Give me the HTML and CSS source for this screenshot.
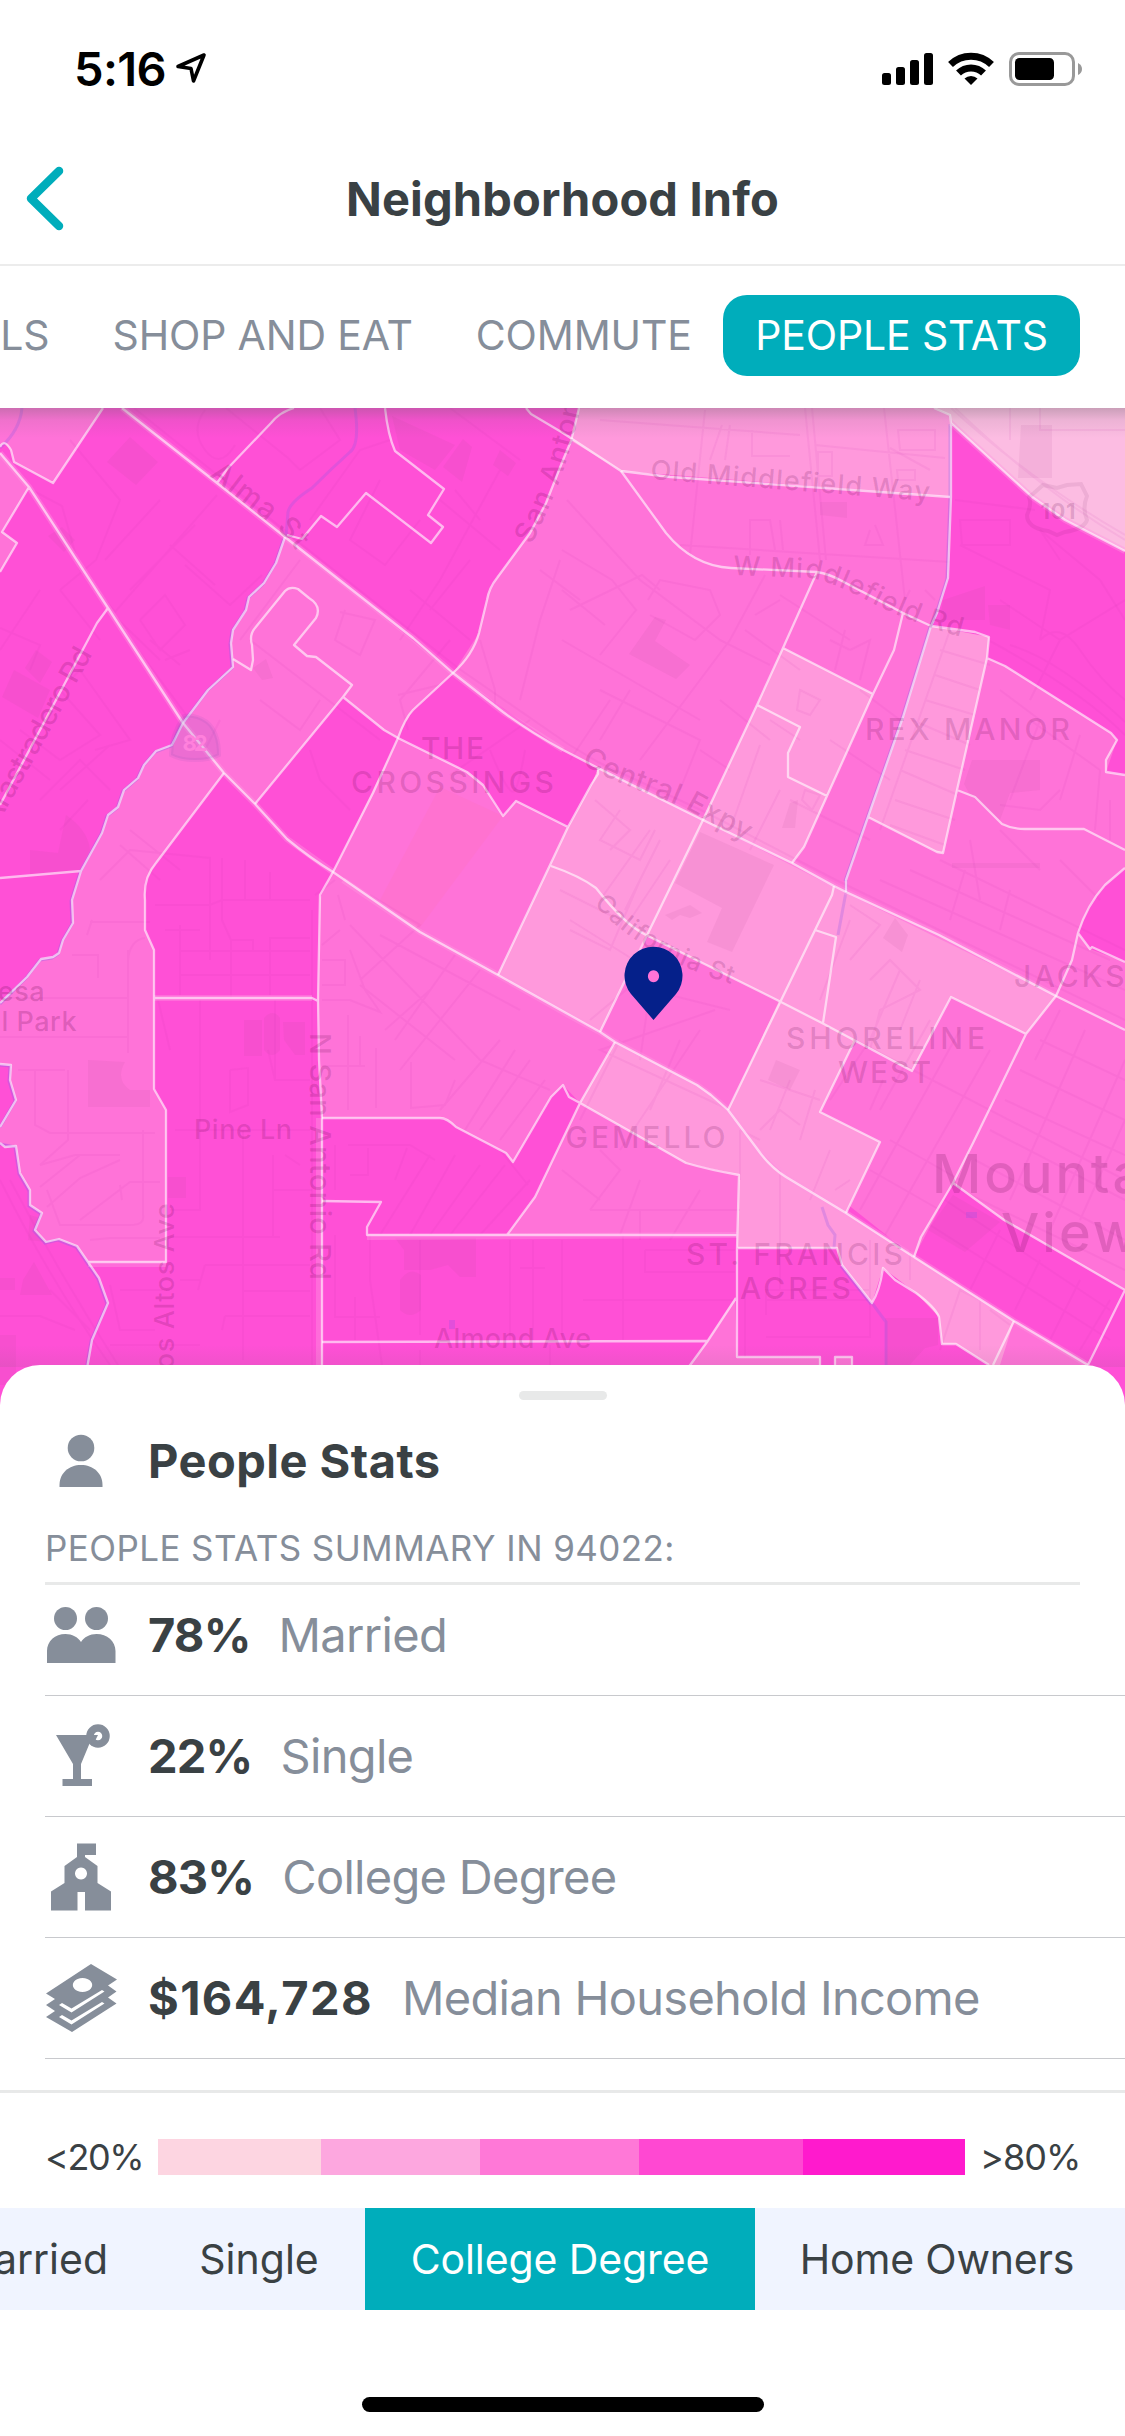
FILE: index.html
```html
<!DOCTYPE html>
<html lang="en">
<head>
<meta charset="utf-8">
<title>Neighborhood Info</title>
<link rel="stylesheet" href="styles.css">
</head>
<body>
<div class="screen">
  <div class="status">
    <span class="time">5:16</span>
    <svg class="loc" width="32" height="32" viewBox="0 0 32 32"><path d="M29 3 L3 14.500 L16 16.500 L18.500 29 Z" fill="none" stroke="#000" stroke-width="3.600" stroke-linejoin="round"/></svg>
    <span class="grow"></span>
    <svg class="signals" width="202" height="36" viewBox="881 51 202 36">
      <rect x="882" y="73" width="9" height="12" rx="2.500"/><rect x="896" y="67" width="9" height="18" rx="2.500"/><rect x="910" y="60" width="9" height="25" rx="2.500"/><rect x="924" y="53" width="9" height="32" rx="2.500"/>
      <g fill="none" stroke="#000" stroke-width="7"><path d="M950.500 64.500 A29.500 29.500 0 0 1 991.500 64.500"/><path d="M958.500 73 A18 18 0 0 1 983.500 73"/></g>
      <path d="M971 85 L964.500 78.500 A9.500 9.500 0 0 1 977.500 78.500 Z"/>
      <rect x="1010.500" y="53.500" width="63" height="31" rx="8.500" fill="none" stroke="#999" stroke-width="3"/>
      <rect x="1015" y="58" width="39" height="22" rx="4.500"/>
      <path d="M1078 63 Q1082 65 1082 69 Q1082 73 1078 75 Z" fill="#999"/>
    </svg>
  </div>
  <header class="nav">
    <svg class="back" width="40" height="66" viewBox="0 0 40 66"><path d="M35 6 L7 33.500 L35 61" fill="none" stroke="#00adbb" stroke-width="8.500" stroke-linecap="round" stroke-linejoin="round"/></svg>
    <h1 class="title">Neighborhood Info</h1>
  </header>
  <nav class="tabs">
    <span class="tab tab-schools">SCHOOLS</span>
    <span class="tab tab-shop">SHOP AND EAT</span>
    <span class="tab tab-commute">COMMUTE</span>
    <span class="tab tab-on">PEOPLE STATS</span>
  </nav>
  <div class="map">
    <svg class="map-art" width="1125" height="1012" viewBox="0 408 1125 1012">
      <defs>
        <linearGradient id="shade" x1="0" y1="0" x2="0" y2="1"><stop offset="0" stop-color="#606060" stop-opacity=".32"/><stop offset=".4" stop-color="#606060" stop-opacity=".1"/><stop offset="1" stop-color="#606060" stop-opacity="0"/></linearGradient>
        <linearGradient id="lift" x1="0" y1="0" x2="0" y2="1"><stop offset="0" stop-color="#606060" stop-opacity="0"/><stop offset="1" stop-color="#606060" stop-opacity=".1"/></linearGradient>
        <path id="alma" d="M209 476 L262 517 Q288 536 304 562"/>
        <path id="sanant" d="M532 545 C548 508 568 475 585 385"/>
        <path id="oldmid" d="M650 479 L940 502"/>
        <path id="wmid" d="M733 575 L810 578 Q835 583 870 602 Q925 630 990 644"/>
        <path id="arast" d="M-3 826 L96 648"/>
        <path id="central" d="M581 763 C615 785 650 792 688 810 L765 852"/>
        <path id="calif" d="M594 904 C630 945 690 975 760 992"/>
      </defs>
      <rect y="408" width="1125" height="1012" class="f4"/>
      <!-- block groups -->
      <g class="f3">
        <path d="M0 408H103L53 483L14 462L11 450L4 444L0 447Z"/>
        <path d="M0 453L29 487L2 532L17 543L0 572Z"/>
        <path d="M285 537L453 673L413 710L398 738L384 730L343 697L255 804L224 773L156 863L145 883L145 930L154 950V1089L166 1110V1262H88L77 1246L59 1239L46 1242L35 1230L42 1213L30 1205V1190L20 1173L16 1146L0 1143V1127L16 1100L10 1080L11 1065L0 1064V1003L27 977L41 959L53 957L59 953L63 940L73 923L72 900L81 871L102 833L108 815L118 807L124 790L138 778L144 765L156 751L172 745L183 723L208 690L233 667L231 643L233 630L246 610L249 597L264 583L276 563Z"/>
        <path d="M398 738L467 772L483 785L503 816L516 801L568 827L498 975L615 1042L580 1103L563 1085L551 1097L513 1162L506 1153L456 1127L445 1118H322L318 1001L320 898L333 872Z"/>
        <path d="M580 1103L686 1163L739 1175L737 1233L507 1235L535 1197Z"/>
        <path d="M571 441L621 471L950 497L948 578L931 626L989 637L987 658L1005 666L1111 733L1117 740L1106 772L1125 775V868L1105 885L1090 905L1078 933L1090 949L1125 962V1290L1004 1220L953 1183L914 1257L728 1110L600 1032L646 935L598 768L563 750L453 673L479 633L489 593L497 578L530 533L546 503L563 460Z"/>
        <path d="M735 1298L737 1357H820V1420H600L691 1365L707 1341ZM835 1357h17v63h-17ZM1014 1321L1088 1365V1420H960L993 1365Z"/>
      </g>
      <g class="f2">
        <path d="M579 408H934L950 415V497L621 471L571 441Z"/>
        <path d="M783 648L873 694L827 796L804 847L792 863L703 820L757 705Z"/>
        <path d="M598 768L703 820L834 887L1056 996L1026 1034L951 997L912 1071L855 1040L820 1112L880 1142L846 1213L786 1177L758 1150L728 1110L779 1001L646 935L600 1032L498 975L568 827L591 785Z"/>
        <path d="M931 626L989 637L987 658L957 790L943 853L937 852L868 817L903 717Z"/>
        <path d="M615 1042L580 1103L686 1163L739 1175L737 1248H837L842 1265L872 1303L883 1268L916 1293L939 1317L942 1344H956L989 1365L1000 1365L1014 1321L846 1213L786 1177L758 1150L728 1110L711 1095L697 1085Z"/>
      </g>
      <path class="f4" d="M453 673L503 712L563 750L598 768L591 785L568 827L516 801L503 816L483 785L467 772L398 738L413 710Z"/>
      <path class="f1" d="M934 408L950 415L951 423L1032 497L1065 520L1125 551V408Z"/>
      <path fill="#ff72d0" d="M440 787L503 816L418 930L380 900Z"/>

      <!-- parks, schools and civic grounds -->
      <g class="ground">
        <path d="M107 462L130 437L158 462L136 485ZM463 439L472 447L462 482L443 467ZM493 465L500 450L516 463L508 476ZM392 416L455 445L435 470L400 450ZM36 650L52 662L40 683L25 668ZM14 670L50 690L38 718L2 697ZM66 815Q88 830 90 850L78 872L30 875V850L58 853ZM48 536L62 527L75 540L64 552ZM253 668L266 659L273 678L262 680Z"/>
        <path d="M88 1060L125 1062Q115 1080 130 1090H150V1107H88ZM244 1020H262V1056H244ZM264 1018Q273 1008 280 1018V1050Q272 1060 264 1050ZM283 1022H305V1055H295L284 1040ZM168 1177H186V1198H168ZM30 1215L40 1218L36 1230L47 1242L28 1240ZM23 1280L34 1262L52 1295H20ZM0 1278H15V1290H0Z"/>
        <path d="M395 1238H476V1277H460L448 1265L430 1270H404V1250ZM400 1280Q410 1266 421 1275V1310Q410 1320 400 1310ZM0 1335h16v50h-16z"/>
        <path d="M629 654L655 617L666 620L655 641L690 665L676 679ZM820 502H847V518L820 515ZM943 600L985 586V620L940 620ZM988 605H1010V630L990 625ZM964 784L972 760H1040V790L1010 793L1000 820L970 795ZM790 803L798 800L795 828L782 828ZM700 832L774 865L732 952L707 942L722 908L675 883ZM665 915L690 905L702 913L690 918L680 915L672 920ZM883 938L895 918L908 935L902 952ZM776 1060L800 1070L790 1090L768 1080ZM953 1195L1000 1222L965 1252L928 1230ZM885 1318H938V1345L925 1348L905 1370H885ZM1021 425H1052V478H1018ZM952 863H1040V868H952Z"/>
      </g>

      <!-- minor streets -->
      <g class="streets">
        <path d="M134 408L226 482L296 540L458 668L568 744L598 762L705 812L836 880L1125 1020M226 408L288 458L300 470M0 628L40 645L30 670M26 487L62 506L80 570L115 612L217 495M110 612L190 720M108 610L160 660M70 440L120 500L96 560L60 590M60 590L100 640M40 590L0 650M160 500L105 560M195 525L130 590M170 545L215 585M185 565L230 605L262 575M140 620L165 595L185 625L160 650L140 620M150 640L180 665M165 660L190 650M20 730L60 760L100 735L60 690M60 690L80 670L130 740L95 750M60 790L110 745M0 740L50 780M40 800L80 760L110 790M88 800L60 830"/>
        <path d="M205 410Q190 430 205 450T235 445M320 408L340 440L300 470M310 520L360 450L390 440M380 480L350 540L385 565L420 520M450 408L520 460M440 500L500 550M500 470L440 580L400 640M410 590L470 640M470 560L430 610M455 490L480 520M300 560L240 640M345 610L335 640L360 655L375 620L340 612M250 640L380 740M260 700L300 730L320 700M220 720L205 750M310 750L320 780L350 810M450 640L400 700L408 730M398 695L440 685M480 640L495 690V705M560 560L540 620L520 700M540 570L580 600M490 750Q510 800 515 790T525 750M450 775L530 720"/>
        <path d="M120 845L160 880M130 830L180 870M100 880L130 850L210 858V960M155 905H210L222 900H310M222 858V920L231 940V998M180 925V995M165 930H200M180 951H310M180 975H310M245 860V900M270 872V900M270 950V938H310M270 950V995M231 940H253V950M128 950V1053M128 960Q130 940 145 938M0 998H128M0 1037H128M72 955H98V978M90 922H150M92 920L87 935M18 1070H65M68 1070V1140L40 1165M35 1070V1125L50 1133H155M40 1165L75 1155L110 1155L120 1155M40 1187L80 1155M47 1207L80 1178L120 1160M80 1220L130 1182H160M143 1130V1215Q145 1225 130 1225H60L47 1190M90 1240L110 1238H160M120 1185L122 1200M158 1000L170 1050M200 1000V1210H170M200 1210V1155M275 1000V1080H310M268 1050L275 1080M230 1070L248 1068V1105L230 1112V1070M175 1130H310M243 1130V1360M170 1237H280M285 1155L300 1165M273 1190H312M273 1155V1237M205 1265H310M205 1265L198 1290M110 1285L120 1330H155M120 1290H170M243 1291H310M225 1316H310M225 1316L222 1330M110 1345H200M180 1280H200"/>
        <path d="M312 910V1365M315 895L335 880M322 1066H365M376 1048V1108M348 1015V1110M360 1036V1065M411 1062V1108L445 1105L455 1080M322 1000H350L380 1012L365 990L350 950M338 895L345 920M322 945L340 930M322 960H345V985H322M350 925L480 1060L550 1090M370 895L420 925L360 980M380 935L520 1010M360 985L455 1060M455 955L395 1040M430 990L385 1030M480 970L400 1070M500 1040L440 1110M515 1050L465 1130M530 1060L480 1130M545 1080L500 1140M348 1145H410L435 1160M335 1145V1190M368 1148V1175H350M407 1148L395 1180M430 1155L380 1235M455 1155L410 1235M480 1165L430 1235M505 1165L450 1235M530 1180L480 1235M500 1150L528 1185M335 1235V1317H380M370 1235V1280L382 1365M355 1297V1340M420 1240V1335M510 1240V1340M533 1240V1340M520 1268H545M562 1240V1340M583 1300H735M645 1250H735M645 1250V1272H735M623 1235V1340M420 1350V1380M550 1345V1365M766 1337H870V1240M766 1300H870M766 1315V1290H870M745 1357V1290M780 1250V1290"/>
        <path d="M567 500L640 580L720 640M562 550L612 580L636 610L600 655M562 590L605 625M570 610L642 575L660 590M648 600L660 580L710 590L720 615L695 640L650 615M765 575L730 640L640 760M720 640L770 665M600 690L700 740L680 790M610 700L570 760M630 690L600 740M562 640L700 720M720 700L770 740M700 750L730 770M755 615L780 600M780 595L850 640M830 640L850 650M845 630L835 670M850 650L870 640L860 680M690 555L705 410M600 420L800 435M590 408L560 408M805 408L820 560M812 408L826 560M884 408L905 600M752 430V456H790M818 452H832V476H818ZM722 425L710 460M730 425L725 460M898 430H935V450H900ZM897 470H915V480H898ZM815 445L945 458M680 545L950 562M750 555V520H770L775 550M783 550L780 520M870 530L865 545H883L875 525M905 600L910 590M925 590L935 600M745 630L800 670M800 690L820 700L810 715L797 710ZM805 790L820 795L812 810L802 800ZM770 720L800 740M780 790L750 850M760 745L730 830M860 690L900 720M830 740L890 780M790 800L870 840M940 650L990 665M935 675L980 690M925 700L975 715M912 720L970 745M905 750L965 770M900 770L958 795M895 800L955 820M890 825L945 845M950 630L880 830"/>
        <path d="M1000 690L1040 720L1010 800M1030 720L1100 770M1080 735L1060 800M1100 770L1095 830M1060 790L1040 810L1000 805M1110 800V840M940 860L1125 950M910 870L1110 960M880 880L1125 990M970 840L980 900M1000 830L1040 870M965 870L950 920M1010 890L1000 930M1060 860L1100 900M1125 600L1060 640L1030 700M1040 640Q1060 620 1080 650T1125 700M962 545H1010V520H960ZM955 500L1035 510M960 545L1050 590L1040 640M1000 600L1060 640M990 641Q1080 690 1125 735M1125 722Q1060 660 1010 645"/>
        <path d="M595 800L630 830L610 850M620 810L600 840L640 860L655 830M640 880L610 950L570 930M650 830L600 900M660 840L625 910M670 860L630 920M580 900L620 920M570 920L650 970L590 1020M560 890L600 910M850 905L880 925L850 960M870 980L890 960L920 990L880 1010L870 1050M920 980L900 1030M900 970L870 1040L830 1100M850 920L820 1000M760 1080L820 1100M790 1080L770 1130M760 1130L780 1110L800 1125M700 1030L620 1150M620 1040L580 1120M680 1040L650 1110M715 1010L600 1050L730 1110M730 1010L650 990L640 1060M815 1090L800 1140M830 1150L810 1200M780 1170V1250M850 1180L835 1190M740 1130V1180M740 1130L760 1140M600 1150L620 1170L590 1210M640 1180L620 1235M700 1190L670 1240M562 1170L600 1200M590 1210H740M640 1210V1240"/>
        <path d="M855 1040L1125 1180M930 1020L880 1110M960 1030L860 1210M990 1050L885 1235M1040 1040L1125 1080M1020 1070L1125 1120M1005 1100L1125 1155M990 1130L1125 1200M975 1160L1125 1240M960 1190L1125 1270M1060 1010L1035 1060M1085 1030L1010 1200M1125 1060L1050 1230M1125 1120L1080 1220M930 1225L1110 1340M945 1200L1110 1310M1000 1230L970 1290M1040 1260L1015 1310M1080 1280L1050 1340M1110 1300L1080 1350M883 1080L870 1110M890 1140L960 1180M870 1170L940 1210M940 1350L960 1290L980 1300V1350M910 1280V1250M990 1310L1010 1325"/>
        <path d="M0 1180Q50 1280 110 1365M10 1180Q60 1275 118 1365M0 1316H40L75 1330M50 1290L90 1330M890 448L930 470M1010 408V440M1040 408V430H1125M1060 560L1040 530L1100 580L1125 620M951 408Q1030 480 1125 535M955 408Q1040 490 1125 540"/>
      </g>
      <path class="stream" d="M22 408Q20 430 0 448M355 408Q360 445 350 452Q330 470 312 488Q290 502 288 512L286 537M822 1207L828 1225L835 1235L834 1248M872 1303L886 1322V1370M846 880V892L838 935"/>
      <path class="pool" d="M449 1320h6v9h-6zM966 1212h11v6h-11z"/>
      <path class="crk" d="M284 538L275 564L263 584L248 598L245 611L232 631L230 644L232 668L207 691L182 724L171 746L155 752L143 766L137 779L123 791L117 808L107 816L101 834L80 872L71 901L72 924L62 941L58 954L52 958L40 960L26 978L0 1004M0 1065L10 1066L9 1081L15 1101L0 1127M0 1144L15 1147L19 1174L29 1191V1206L41 1214L34 1231L45 1243L58 1240L76 1247L87 1263L98 1279L107 1304L91 1341L84 1381M950 424V498L947 579L936 614L930 627L902 718L867 818L845 881M841 1266L871 1304"/>

      <!-- boundary lines -->
      <g class="glow"><path d="M0 453L29 487L108 608L183 723L224 773L255 804L287 839L333 872M122 408L217 483L285 537L413 638L453 673L503 712L563 750M154 998H312"/><path d="M343 880L420 932L498 975L563 1012L600 1032L615 1042L697 1085L711 1095L728 1110L758 1150L786 1177L846 1213L914 1257L1014 1321L1088 1365M598 768L703 820L792 863L834 886L846 892L939 935L1056 996M319 1118V1380M88 1264H166M367 1237L737 1235M934 408L951 423L1032 497L1065 520L1125 551"/></g>
      <g class="bound">
        <path d="M103 408L53 483L14 462L11 450Q4 438 0 447M0 453L29 487L108 608L183 723L224 773L255 804L287 839Q310 858 333 872L420 932L498 975L600 1032L615 1042L697 1085L711 1095L728 1110L758 1150Q770 1167 786 1177L846 1213L914 1257L1014 1321L1088 1365M29 487L2 532L17 543L0 572M108 608L97 623L0 805M122 408L217 483L285 537L413 638L453 673L503 712Q530 732 563 750L598 768L703 820L792 863L834 886L846 892L939 935L1056 996L1125 1030M294 408Q280 412 271 423L228 468L217 483M385 408Q388 435 395 451L444 489L428 515L443 527L431 543L366 493L337 527L321 516L302 539L287 535M526 408L531 414L563 433L621 471L670 477L950 497"/>
        <path d="M579 408L571 441L563 460L546 503L530 533L497 578Q489 588 487 600L479 633Q473 655 453 673L413 710Q405 718 398 738L373 793L333 872L320 895L318 1000L319 1060L322 1118V1380M285 537L276 563L264 583L249 597L246 610L233 630L231 643L233 667L208 690L183 723L172 745L156 751L144 765L138 778L124 790L118 807L108 815L102 833L81 871L72 900L73 923L63 940L59 953L53 957L41 959L27 977L0 1003M0 878L81 871M224 773L156 863Q143 878 145 900L145 930L154 950V1089L166 1110V1262H88M0 1064L11 1065L10 1080L16 1100L0 1127M0 1143L5 1147L16 1146L20 1173L30 1190V1205L42 1213L35 1230L46 1242L59 1239L77 1246L88 1262L99 1278L108 1303L92 1340L85 1380M154 998H312L318 1001"/>
        <path d="M398 738L384 730L343 697L352 685L316 657L307 656L294 645L316 618Q322 606 309 598L298 589Q290 586 285 591L255 628Q249 635 252 645L253 660L251 670L233 659M343 697L255 804M398 738L467 772L483 785L503 816L516 801L568 827M598 768V774L591 785L568 827L498 975M551 866Q580 876 596 888Q625 925 646 935L779 1001L822 1023L912 1071L951 997L1026 1034M703 820L600 1032M834 886L832 895L728 1110M815 930L836 937L823 1023M855 1040L820 1112L880 1142L846 1213M1125 868L1105 885Q1087 905 1078 933L1072 960L1056 996L1026 1034L973 1143L953 1183L921 1237L914 1257M1078 933L1090 949L1092 947L1125 962M953 1183L1004 1220L1125 1290L1088 1365"/>
        <path d="M615 1042L580 1103L535 1197L507 1235M322 1118H440Q447 1118 456 1127L506 1153L513 1162L551 1097L563 1085L569 1097L580 1103L686 1163Q710 1170 739 1175L737 1248V1357H820V1380M322 1201L381 1202L367 1227V1235H737M322 1342L707 1341M736 1298L707 1342L685 1372M737 1248H837L842 1265L872 1303Q880 1290 883 1268L895 1280L916 1293Q935 1307 939 1317L942 1344H956L989 1365M1014 1321L993 1365M835 1380V1357H852V1380"/>
        <path d="M934 408L950 415L951 423L1032 497L1065 520L1125 551M951 423V497L948 578L937 613L931 626L903 717L868 817L846 880V892M621 471L666 533Q693 566 731 568L817 572Q829 574 840 580L903 613L931 626L975 632L989 637L987 658L957 790L943 853L937 852L868 817M817 572L783 648L757 705L703 820M783 648L873 694L894 650L903 613M873 694L827 796L804 847L792 863M757 705L800 727L788 753V777L827 796M987 658L1005 666L1111 733L1117 740L1106 760V772L1125 775M957 790L975 797L1002 824Q1012 829 1025 829H1084L1125 850"/>
      </g>

      <!-- highway shields -->
      <g class="shield"><path d="M184 716Q195 714 207 722Q219 732 219 755Q210 760 195 760Q180 760 171 755Q171 735 184 716Z" fill="#7850b4" fill-opacity=".14" stroke="#7850b4" stroke-opacity=".1" stroke-width="4"/><path d="M1034 493L1043 485L1057 488L1067 485L1081 484L1087 496Q1082 508 1087 520Q1084 529 1065 532L1057 535L1048 531Q1027 528 1027 515Q1032 504 1029 497Z" fill="none" stroke="#50003c" stroke-opacity=".08" stroke-width="4"/></g>
      <text x="195" y="751" class="rt" textLength="25" fill="#ff80dc">82</text>
      <text x="1058" y="519" class="rt lbl" textLength="35">101</text>

      <!-- labels -->
      <g class="lbl street">
        <text class="big" textLength="116"><textPath href="#alma">Alma St</textPath></text>
        <text class="big"><textPath href="#sanant">San Antonio Rd</textPath></text>
        <text textLength="281"><textPath href="#oldmid">Old Middlefield Way</textPath></text>
        <text textLength="240"><textPath href="#wmid">W Middlefield Rd</textPath></text>
        <text class="big" textLength="198"><textPath href="#arast">Arastradero Rd</textPath></text>
        <text class="big" textLength="184"><textPath href="#central">Central Expy</textPath></text>
        <text class="small" textLength="162"><textPath href="#calif">California St</textPath></text>
        <text x="194" y="1139" textLength="99">Pine Ln</text>
        <text x="434" y="1348" textLength="158">Almond Ave</text>
        <text transform="translate(310 1033) rotate(90)" textLength="248" class="big">N San Antonio Rd</text>
        <text transform="translate(174 1385) rotate(-90)" textLength="183">Los Altos Ave</text>
      </g>
      <g class="lbl hood">
        <text x="454" y="759" textLength="66">THE</text><text x="454" y="793" textLength="206">CROSSINGS</text>
        <text x="969" y="740" textLength="208">REX MANOR</text>
        <text x="887" y="1049" textLength="202">SHORELINE</text><text x="886" y="1083" textLength="96">WEST</text>
        <text x="647" y="1148" textLength="163">GEMELLO</text>
        <text x="796" y="1265" textLength="220">ST. FRANCIS</text><text x="797" y="1299" textLength="114">ACRES</text>
        <text x="1014" y="987" class="left">JACKSON PARK</text>
      </g>
      <g class="lbl park"><text x="45" y="1001" class="right">Mesa</text><text x="77" y="1031" class="right">Paul Park</text></g>
      <g class="lbl city"><text x="932" y="1193">Mountain</text><text x="1001" y="1252">View</text></g>

      <rect y="408" width="1125" height="30" fill="url(#shade)"/>
      <rect y="1345" width="1125" height="22" fill="url(#lift)"/>
      <path fill="#05208a" fill-rule="evenodd" d="M653.500 1020L631 994A29 29 0 1 1 676 994ZM653.500 970.200a5.600 6 0 1 0 .01 0Z"/>
    </svg>
  </div>

  <section class="sheet">
    <div class="grip"></div>
    <div class="sheet-head">
      <svg class="ico" width="72" height="60" viewBox="0 0 72 60"><circle cx="36" cy="17" r="13.300"/><path d="M14.500 56V54C14.500 42 24 34 36 34S57.500 42 57.500 54V56Z"/></svg>
      <h2 class="sheet-title">People Stats</h2>
    </div>
    <p class="summary">PEOPLE STATS SUMMARY IN 94022:</p>
    <ul class="rows">
      <li class="row row-first"><svg class="ico" width="72" height="72" viewBox="45 1601 72 72"><circle cx="65.500" cy="1618.500" r="11.500"/><circle cx="96.500" cy="1618.500" r="11.500"/><path d="M47 1663V1651C47 1641 55 1634 65.500 1634C72 1634 78 1637 81 1642C84 1637 90 1634 96.500 1634C107 1634 115.500 1641 115.500 1651V1663Z"/></svg><b class="num">78%</b><span class="what">Married</span></li>
      <li class="row"><svg class="ico" width="72" height="72" viewBox="45 1720 72 72"><path d="M56 1735H88L91 1740L81 1764V1779H92V1786H62.500V1779H73V1764Z"/><circle cx="98" cy="1736" r="8" fill="none" stroke="#868e9a" stroke-width="7.500"/><path d="M93 1735H98L95 1741L91 1746Z"/></svg><b class="num">22%</b><span class="what">Single</span></li>
      <li class="row"><svg class="ico" width="72" height="72" viewBox="45 1841 72 72"><path fill-rule="evenodd" d="M77 1843.500H96V1855H85V1857L97.500 1866V1883L111 1891.500V1910.500H85V1892H77.500V1910.500H51V1891.500L64.500 1883V1866L77 1857ZM81 1867.500a6 6 0 1 0 .01 0Z"/></svg><b class="num">83%</b><span class="what">College Degree</span></li>
      <li class="row"><svg class="ico" width="72" height="72" viewBox="45 1962 72 72"><path fill-rule="evenodd" d="M91 1964L117 1979.500L108 1985.500L116.500 1991.500L108 1997.500L116.500 2003.500L72 2032L46 2017L55 2011L46 2005L55 1999L46 1993.500ZM82.500 1978a9.700 7 0 1 0 .01 0ZM59 2005L62 2003L71.500 2008.500L102 1990L104.500 1991.500L71.500 2012.500ZM59 2017L62 2015L71.500 2020.500L102 2002L104.500 2003.500L71.500 2024.500Z"/></svg><b class="num num-wide">$164,728</b><span class="what">Median Household Income</span></li>
    </ul>
  </section>
  <div class="legend">
    <span class="lo">&lt;20%</span>
    <div class="scale"><i class="s1"></i><i class="s2"></i><i class="s3"></i><i class="s4"></i><i class="s5"></i></div>
    <span class="hi">&gt;80%</span>
  </div>
  <div class="filters">
    <span class="filter f-married">Married</span><span class="filter f-single">Single</span><span class="filter f-college">College Degree</span><span class="filter f-home">Home Owners</span>
  </div>
  <div class="home"></div>
</div>
</body>
</html>
```
FILE: styles.css
```css
* { box-sizing: border-box; }
body { margin: 0; background: #fff; font-family: Inter, "Liberation Sans", sans-serif; color: #3a4144; }
.screen { width: 1125px; height: 2436px; overflow: hidden; display: flex; flex-direction: column; background: #fff; }
.screen > * { flex: none; }

.status { height: 132px; padding: 6px 42px 0 74px; display: flex; align-items: center; color: #000; }
.time { font-size: 47px; font-weight: 600; letter-spacing: -.6px; padding-bottom: 2px; }
.loc { margin: 0 0 2px 9px; }
.grow { flex: 1; }

.nav { height: 134px; padding: 0 24px; display: grid; grid-template-columns: 40px 1fr 40px; align-items: center; border-bottom: 2px solid #ececec; }
.title { margin: 0; text-align: center; font-size: 47px; font-weight: 700; line-height: 60px; letter-spacing: .15px; padding-top: 2px; }

.tabs { height: 142px; display: flex; align-items: center; justify-content: flex-end; padding: 0 45px 3px 0; font-size: 41px; letter-spacing: -.15px; color: #868e9a; white-space: nowrap; }
.tab { height: 81px; line-height: 81px; padding: 0 31.5px; }
.tab-on { background: #00adbb; color: #fff; border-radius: 24px; padding: 0 32px; }

.map { height: 957px; }
.map-art { display: block; }
.f1 { fill: #fcbce2; }
.f2 { fill: #ff99dc; }
.f3 { fill: #ff73d8; }
.f4 { fill: #ff50d6; }
.ground { fill: #b45096; fill-opacity: .1; }
.streets { fill: none; stroke: #c83cb4; stroke-opacity: .09; stroke-width: 2; }
.stream { fill: none; stroke: #8c5ae6; stroke-opacity: .26; stroke-width: 3; }
.pool { fill: #a050e6; fill-opacity: .3; }
.crk { fill: none; stroke: #7864f0; stroke-opacity: .3; stroke-width: 3; }
.glow { fill: none; stroke: #ff96e1; stroke-opacity: .4; stroke-width: 6; }
.bound { fill: none; stroke: #fff; stroke-opacity: .6; stroke-width: 2.300; stroke-linejoin: round; }
.lbl { fill: #50003c; fill-opacity: .17; }
.street { font-size: 27px; font-weight: 500; letter-spacing: 1px; }
.big { font-size: 29px; }
.small { font-size: 25px; }
.hood { font-size: 30px; font-weight: 500; text-anchor: middle; letter-spacing: 3px; }
.left { text-anchor: start; }
.right { text-anchor: end; }
.rt { font-size: 22px; font-weight: 700; text-anchor: middle; }
.park { font-size: 27px; font-weight: 500; letter-spacing: .5px; fill-opacity: .2; }
.city { font-size: 54px; font-weight: 500; letter-spacing: 3px; }

.sheet { position: relative; height: 728px; background: #fff; border-radius: 40px 40px 0 0; border-bottom: 3px solid #e8e9e9; }
.grip { width: 88px; height: 9px; margin: 26px auto 0; border-radius: 5px; background: #e8e9e9; }
.sheet-head { display: flex; align-items: center; height: 66px; margin-top: 28px; padding-left: 45px; }
.ico { flex: none; fill: #868e9a; }
.sheet-title { margin: 0 0 0 31px; padding-bottom: 2px; font-size: 47px; font-weight: 700; letter-spacing: .45px; }
.summary { margin: 26px 45px 0; height: 65px; border-bottom: 3px solid #e8e9e9; font-size: 35px; line-height: 56px; color: #868e9a; letter-spacing: .42px; }
.rows { list-style: none; margin: 0; padding: 0 0 0 45px; }
.row { height: 121px; display: flex; align-items: center; border-bottom: 1px solid #c8c9cd; font-size: 47px; white-space: nowrap; }
.row-first { height: 111px; padding-bottom: 7px; }
.num { margin-left: 31px; padding-bottom: 2px; font-weight: 700; letter-spacing: -.8px; }
.num-wide { letter-spacing: 1.4px; }
.num-wide + .what { margin-left: 29px; }
.row-first .num, .row-first .what { padding-bottom: 4px; }
.what { margin-left: 28px; padding-bottom: 2px; color: #868e9a; letter-spacing: -.7px; }

.legend { height: 115px; display: flex; align-items: center; padding: 12px 0 0 45px; font-size: 36px; white-space: nowrap; }
.legend > * { flex: none; }
.lo { width: 113px; letter-spacing: -1.4px; }
.scale { display: flex; height: 36px; width: 807px; }
.scale i { display: block; }
.s1 { width: 163px; background: #fdd5e1; }
.s2 { width: 159px; background: #fda7df; }
.s3 { width: 159px; background: #ff78d7; }
.s4 { width: 164px; background: #ff48d2; }
.s5 { width: 162px; background: #ff1acd; }
.hi { margin-left: 15px; letter-spacing: -.9px; }

.filters { height: 102px; display: flex; background: #f0f4ff; font-size: 41px; line-height: 102px; white-space: nowrap; overflow: hidden; }
.filter { flex: none; text-align: center; }
.f-married { width: 153px; display: flex; justify-content: flex-end; padding-right: 45px; }
.f-single { width: 212px; }
.f-college { width: 390px; background: #00adbb; color: #fff; letter-spacing: -.1px; }
.f-home { width: 370px; padding-right: 6px; letter-spacing: -.2px; }
.home { width: 402px; height: 15px; margin: 87px auto 0; border-radius: 8px; background: #000; }
```
